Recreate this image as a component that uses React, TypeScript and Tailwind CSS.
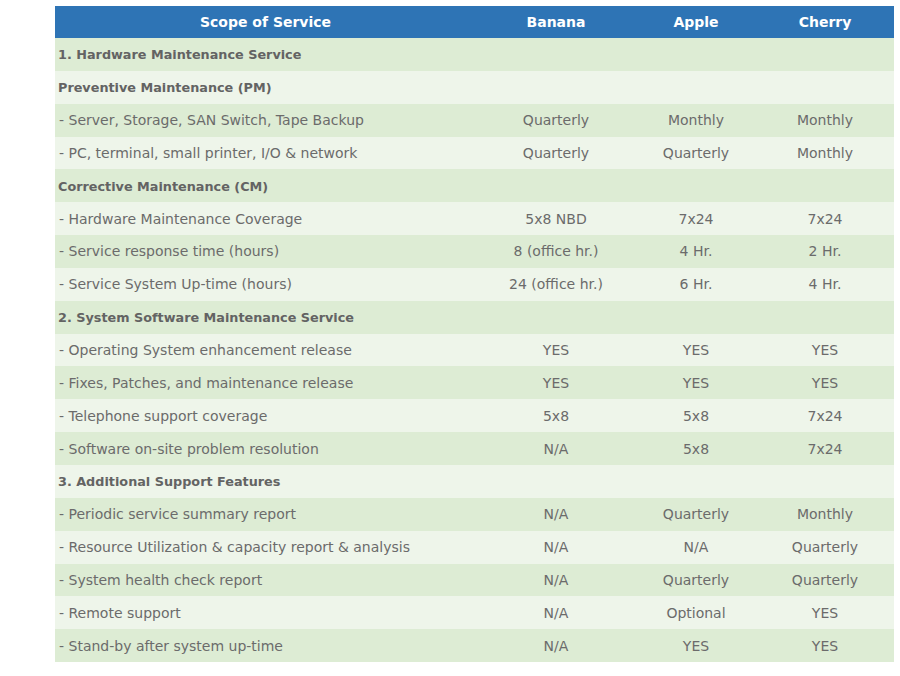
const ROWS: { label: string; bold?: boolean; vals?: [string, string, string] }[] = [
  { label: "1. Hardware Maintenance Service", bold: true },
  { label: "Preventive Maintenance (PM)", bold: true },
  { label: "- Server, Storage, SAN Switch, Tape Backup", vals: ["Quarterly", "Monthly", "Monthly"] },
  { label: "- PC, terminal, small printer, I/O & network", vals: ["Quarterly", "Quarterly", "Monthly"] },
  { label: "Corrective Maintenance (CM)", bold: true },
  { label: "- Hardware Maintenance Coverage", vals: ["5x8 NBD", "7x24", "7x24"] },
  { label: "- Service response time (hours)", vals: ["8 (office hr.)", "4 Hr.", "2 Hr."] },
  { label: "- Service System Up-time (hours)", vals: ["24 (office hr.)", "6 Hr.", "4 Hr."] },
  { label: "2. System Software Maintenance Service", bold: true },
  { label: "- Operating System enhancement release", vals: ["YES", "YES", "YES"] },
  { label: "- Fixes, Patches, and maintenance release", vals: ["YES", "YES", "YES"] },
  { label: "- Telephone support coverage", vals: ["5x8", "5x8", "7x24"] },
  { label: "- Software on-site problem resolution", vals: ["N/A", "5x8", "7x24"] },
  { label: "3. Additional Support Features", bold: true },
  { label: "- Periodic service summary report", vals: ["N/A", "Quarterly", "Monthly"] },
  { label: "- Resource Utilization & capacity report & analysis", vals: ["N/A", "N/A", "Quarterly"] },
  { label: "- System health check report", vals: ["N/A", "Quarterly", "Quarterly"] },
  { label: "- Remote support", vals: ["N/A", "Optional", "YES"] },
  { label: "- Stand-by after system up-time", vals: ["N/A", "YES", "YES"] },
]

const COLS = "grid grid-cols-[421px_160px_120px_138px]"

export default function App() {
  return (
    <div className="min-h-screen bg-white pl-[55px] pt-[6px] font-['DejaVu_Sans',sans-serif]">
      <div className="w-[839px]">
        {/* Header */}
        <div className={`${COLS} h-[32px] items-center bg-[#2e74b5] pt-[1px] text-[14px] font-bold text-white`}>
          <div className="text-center">Scope of Service</div>
          <div className="text-center">Banana</div>
          <div className="text-center">Apple</div>
          <div className="text-center">Cherry</div>
        </div>

        {/* Body */}
        {ROWS.map((r, i) => (
          <div
            key={i}
            className={`${COLS} h-[32.85px] items-center pt-[1px] text-[14px] ${i % 2 === 0 ? "bg-[#ddecd4]" : "bg-[#eef5ea]"}`}
          >
            <div
              className={
                r.bold
                  ? "pl-[3px] text-[12.8px] font-bold text-[#636363]"
                  : "pl-[4px] text-[#6b6b6b]"
              }
            >
              {r.label}
            </div>
            {r.vals?.map((v, j) => (
              <div key={j} className="text-center text-[#6b6b6b]">
                {v}
              </div>
            ))}
          </div>
        ))}
      </div>
    </div>
  )
}
